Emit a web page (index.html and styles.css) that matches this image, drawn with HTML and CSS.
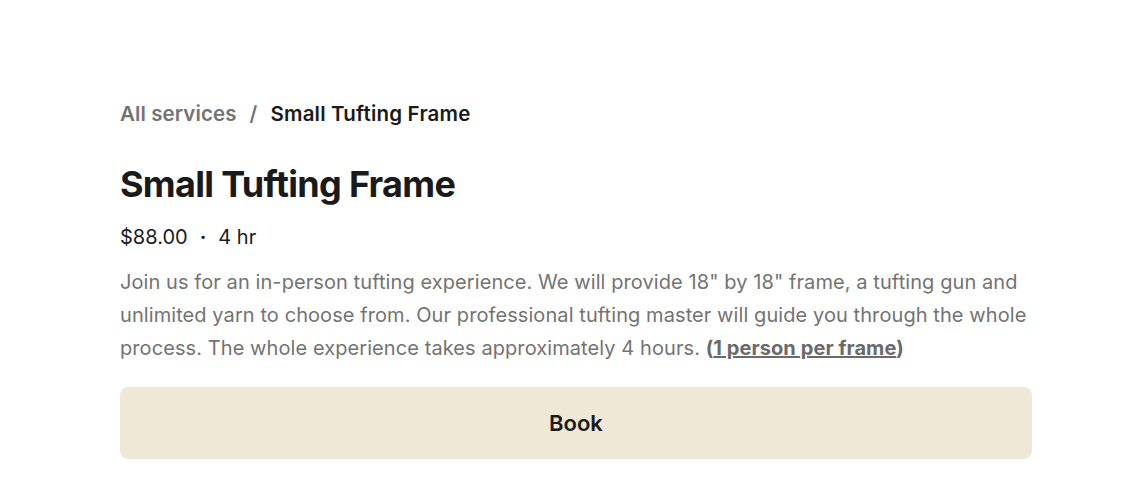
FILE: index.html
```html
<!DOCTYPE html>
<html>
<head>
<meta charset="utf-8">
<link rel="stylesheet" href="styles.css">
</head>
<body>
<main class="page">
  <nav class="crumbs">
    <a class="crumb-link" href="#">All services</a>
    <span class="crumb-sep">/</span>
    <span class="crumb-current">Small Tufting Frame</span>
  </nav>
  <h1 class="title">Small Tufting Frame</h1>
  <div class="meta"><span>$88.00</span><span class="dot">·</span><span>4 hr</span></div>
  <p class="desc">Join us for an in-person tufting experience. We will provide 18" by 18" frame, a tufting gun and unlimited yarn to choose from. Our professional tufting master will guide you through the whole process. The whole experience takes approximately 4 hours. <span class="note">(<a class="note-link" href="#">1 person per frame</a>)</span></p>
  <button class="book">Book</button>
</main>
</body>
</html>
```
FILE: styles.css
```css
html, body { margin: 0; padding: 0; background: #fff; }
body { font-family: Inter, "Noto Sans", sans-serif; color: #1a1a1a; }
.page { width: 912px; padding: 100px 0 0 120px; display: flex; flex-direction: column; }
.crumbs { display: flex; align-items: center; gap: 13px; font-size: 20.5px; font-weight: 600; line-height: 28px; letter-spacing: 0.1px; }
.crumb-link { color: #737373; text-decoration: none; }
.crumb-sep { color: #737373; }
.crumb-current { color: #1a1a1a; letter-spacing: 0.2px; }
.title { margin: 34px 0 0; font-size: 36px; font-weight: 700; letter-spacing: -0.7px; line-height: 44px; color: #1a1a1a; }
.meta { margin-top: 18px; display: flex; gap: 12px; font-size: 20px; line-height: 26px; color: #1a1a1a; }
.dot { font-weight: 700; }
.desc { margin: 16px 0 0; font-size: 20px; letter-spacing: 0.08px; line-height: 33px; color: #737373; }
.note { display: inline-block; font-weight: 700; color: #6a6a6a; }
.note-link { color: inherit; text-decoration: underline; }
.book { margin-top: 22px; height: 72px; border: none; border-radius: 8px; background: #f0e8d6; font-family: Inter, sans-serif; font-size: 22px; font-weight: 600; color: #1a1a1a; cursor: pointer; }
```
